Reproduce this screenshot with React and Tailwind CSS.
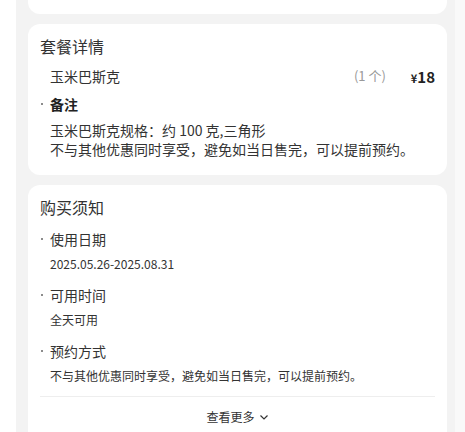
import React from 'react';

const Dot = () => (
  <span className="w-[10px] h-[20px] flex items-center pl-[1px]">
    <span className="w-[2px] h-[2px] rounded-full bg-[#666]" />
  </span>
);

const NoticeItem = ({ label, value, first }) => (
  <div className={first ? 'mt-[10px]' : 'mt-[11px]'}>
    <div className="flex items-center h-[20px]">
      <Dot />
      <span className="text-[14px] leading-[20px] text-[#333]">{label}</span>
    </div>
    <div className="mt-[5px] pl-[10px] text-[12px] leading-[20px] text-[#333]">{value}</div>
  </div>
);

const App = () => {
  return (
    <div className="h-[432px] overflow-hidden flex bg-white font-['Noto_Sans_CJK_SC','Noto_Sans',sans-serif]">
      <div className="w-[16px] bg-white" />
      <div className="w-[439px] bg-[#f3f3f3] pl-3 pr-2">
        {/* previous card tail */}
        <div className="h-[14px] bg-white rounded-b-xl" />

        {/* 套餐详情 */}
        <div className="mt-[10px] bg-white rounded-xl pt-[10px] px-3 pb-4">
          <h2 className="text-[16px] leading-[24px] text-[#333]">套餐详情</h2>
          <div className="mt-2 h-[20px] flex items-center pl-[10px]">
            <span className="flex-1 text-[14px] text-[#333]">玉米巴斯克</span>
            <span className="text-[13px] text-[#999]">(1 个)</span>
            <span className="ml-[25px] text-[#222] font-bold">
              <span className="text-[11px]">¥</span>
              <span className="text-[15px]">18</span>
            </span>
          </div>
          <div className="mt-2 h-[20px] flex items-center">
            <Dot />
            <span className="text-[14px] font-bold text-[#222]">备注</span>
          </div>
          <div className="mt-[7px] pl-[10px] text-[14px] leading-[19px] text-[#333]">
            <p>玉米巴斯克规格：约 100 克,三角形</p>
            <p>不与其他优惠同时享受，避免如当日售完，可以提前预约。</p>
          </div>
        </div>

        {/* 购买须知 */}
        <div className="mt-[10px] bg-white rounded-xl pt-[10px] px-3 pb-6">
          <h2 className="text-[16px] leading-[24px] text-[#333]">购买须知</h2>
          <NoticeItem first label="使用日期" value="2025.05.26-2025.08.31" />
          <NoticeItem label="可用时间" value="全天可用" />
          <NoticeItem label="预约方式" value="不与其他优惠同时享受，避免如当日售完，可以提前预约。" />
          <div className="mt-[10px] h-px bg-[#eeeeee]" />
          <div className="mt-[10px] h-[20px] flex items-center justify-center gap-1 text-[12px] text-[#333]">
            <span>查看更多</span>
            <svg className="w-[10px] h-[10px]" viewBox="0 0 10 10" fill="none" stroke="#333" strokeWidth="1.2">
              <path d="M1.5 3.5L5 7l3.5-3.5" />
            </svg>
          </div>
        </div>
      </div>
      <div className="flex-1 bg-[#f9f9f9]" />
    </div>
  );
};

export default App;
